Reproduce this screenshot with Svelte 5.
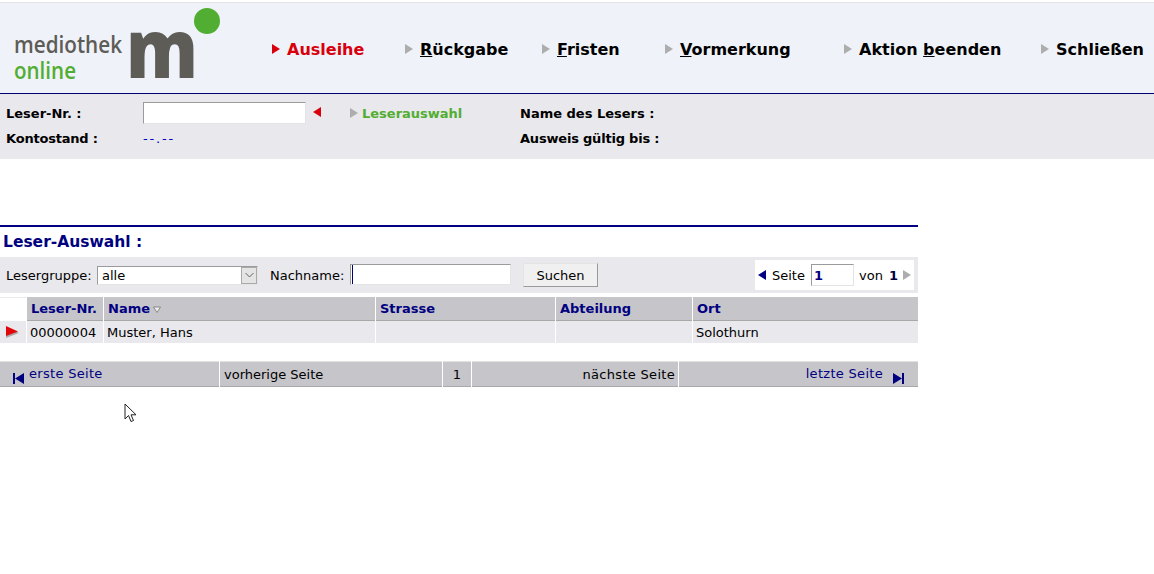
<script>
    const nav = [
        { pre: '', key: '', post: 'Ausleihe', width: 133, active: true },
        { pre: '', key: 'R', post: 'ückgabe', width: 137 },
        { pre: '', key: 'F', post: 'risten', width: 123 },
        { pre: '', key: 'V', post: 'ormerkung', width: 179 },
        { pre: 'Aktion ', key: 'b', post: 'eenden', width: 197 },
        { pre: '', key: '', post: 'Schließen', width: 113 }
    ];

    const columns = [
        { title: 'Leser-Nr.', value: '00000004', width: 76 },
        { title: 'Name', value: 'Muster, Hans', width: 271, sorted: true },
        { title: 'Strasse', value: '', width: 179 },
        { title: 'Abteilung', value: '', width: 136 },
        { title: 'Ort', value: 'Solothurn', width: 225 }
    ];
</script>

<header class="top">
    <svg class="logo" width="272" height="90" viewBox="0 0 272 90">
        <text x="14" y="50" class="logo-grey" textLength="108" lengthAdjust="spacingAndGlyphs">mediothek</text>
        <text x="14" y="76" class="logo-green" textLength="62" lengthAdjust="spacingAndGlyphs">online</text>
        <text x="126" y="75" class="logo-m" textLength="72" lengthAdjust="spacingAndGlyphs">m</text>
        <circle cx="207" cy="18" r="13" fill="#52ae32" />
    </svg>
    <nav class="nav">
        {#each nav as item}
            <div class="nav-item" class:active={item.active} style="width: {item.width}px">
                <span class="tri"></span>
                <span>{item.pre}<u>{item.key}</u>{item.post}</span>
            </div>
        {/each}
    </nav>
</header>

<section class="reader">
    <div class="reader-row">
        <span class="lbl first">Leser-Nr. :</span>
        <input class="field reader-input" type="text" />
        <span class="tri-back red"></span>
        <span class="tri small"></span>
        <span class="select-link">Leserauswahl</span>
        <span class="lbl name">Name des Lesers :</span>
    </div>
    <div class="reader-row tight">
        <span class="lbl first">Kontostand :</span>
        <span class="balance">--.--</span>
        <span class="lbl valid">Ausweis gültig bis :</span>
    </div>
</section>

<main class="content">
    <h1>Leser-Auswahl :</h1>

    <div class="toolbar">
        <label class="t-group" for="gruppe">Lesergruppe:</label>
        <div class="fake-select" id="gruppe">
            <span>alle</span>
            <span class="select-btn">
                <svg width="9" height="6" viewBox="0 0 9 6"><path d="M0.5 1 L4.5 5 L8.5 1" fill="none" stroke="#666" /></svg>
            </span>
        </div>
        <label class="t-name" for="nachname">Nachname:</label>
        <div class="name-wrap">
            <input class="field name-input" id="nachname" type="text" />
            <span class="caret"></span>
        </div>
        <button class="search" type="button">Suchen</button>
        <div class="pager">
            <span class="tri-back navy"></span>
            <span class="pager-seite">Seite</span>
            <input class="field page-input" type="text" value="1" />
            <span class="pager-von">von <b>1</b></span>
            <span class="tri"></span>
        </div>
    </div>

    <div class="thead">
        <div class="corner"></div>
        {#each columns as col}
            <div class="th" style="width: {col.width}px">
                {col.title}
                {#if col.sorted}
                    <svg class="sort" width="8" height="7" viewBox="0 0 8 7"><path d="M0.5 1 H7.5 L4 6.5 Z" fill="#eee" stroke="#777" stroke-width="0.8" /></svg>
                {/if}
            </div>
        {/each}
    </div>
    <div class="tbody">
        <div class="marker">
            <svg width="14" height="14" viewBox="0 0 14 14">
                <path d="M1 2 L14 8 L1 13 Z" fill="#aaa" />
                <path d="M1 1 L13 6.5 L1 11 Z" fill="#e0060c" />
            </svg>
        </div>
        {#each columns as col}
            <div class="td" style="width: {col.width}px">{col.value}</div>
        {/each}
    </div>

    <div class="pagebar">
        <div class="pb first-page">
            <svg width="11" height="11" viewBox="0 0 11 11"><path d="M0 0 H2 V11 H0 Z M11 0 V11 L2 5.5 Z" fill="#000080" /></svg>
            <span>erste Seite</span>
        </div>
        <div class="pb prev">vorherige Seite</div>
        <div class="pb num">1</div>
        <div class="pb next">nächste Seite</div>
        <div class="pb last-page">
            <span>letzte Seite</span>
            <svg width="11" height="11" viewBox="0 0 11 11"><path d="M0 0 L9 5.5 L0 11 Z M9 0 H11 V11 H9 Z" fill="#000080" /></svg>
        </div>
    </div>
</main>

<svg class="cursor" width="14" height="20" viewBox="0 0 14 20">
    <path d="M1 1 V16 L4.5 12.5 L7 18.5 L9.5 17.5 L7 11.8 H12 Z" fill="#fff" stroke="#222" stroke-width="1" />
</svg>

<style>
    :global(body) {
        margin: 0;
        background: #fff;
        font-family: "DejaVu Sans", Verdana, sans-serif;
        font-size: 13px;
        color: #000;
    }

    .top {
        display: flex;
        height: 90px;
        margin-top: 2px;
        background: #eff2f8;
        border-top: 1px solid #e2e2e2;
        border-bottom: 1px solid #000070;
    }

    .logo {
        flex: none;
        display: block;
    }

    .logo-grey {
        font: 600 23px "Open Sans", sans-serif;
        fill: #5d5c57;
    }

    .logo-green {
        font: 600 23px "Open Sans", sans-serif;
        fill: #52ae32;
    }

    .logo-m {
        font: 800 82px "Open Sans", sans-serif;
        fill: #5d5c57;
    }

    .nav {
        display: flex;
        align-items: center;
        box-sizing: border-box;
        height: 90px;
        padding-top: 2px;
        font-size: 16px;
        font-weight: bold;
    }

    .nav-item {
        display: flex;
        align-items: center;
        gap: 7px;
        white-space: nowrap;
    }

    .nav-item.active {
        color: #d9000d;
    }

    .tri {
        flex: none;
        width: 0;
        height: 0;
        border-left: 8px solid #adadad;
        border-top: 5px solid transparent;
        border-bottom: 5px solid transparent;
    }

    .nav-item.active .tri {
        border-left-color: #d9000d;
    }

    .reader {
        height: 65px;
        box-sizing: border-box;
        padding-top: 7px;
        background: #e9e8ec;
        font-weight: bold;
    }

    .reader-row {
        display: flex;
        align-items: center;
        height: 24px;
        margin-bottom: 1px;
    }

    .reader-row.tight .lbl {
        letter-spacing: -0.2px;
    }

    .lbl.first {
        width: 143px;
        padding-left: 6px;
        box-sizing: border-box;
        flex: none;
    }

    .field {
        box-sizing: border-box;
        background: #fff;
        border: 1px solid #e4e4e4;
        border-top-color: #9b9b9b;
        border-left-color: #9b9b9b;
        margin: 0;
        padding: 0 2px;
        font: inherit;
        outline: none;
    }

    .reader-input {
        width: 163px;
        height: 22px;
        flex: none;
    }

    .tri-back {
        flex: none;
        width: 0;
        height: 0;
        border-top: 5px solid transparent;
        border-bottom: 5px solid transparent;
        border-right: 8px solid #000080;
    }

    .tri-back.red {
        border-right-color: #d9000d;
        margin: -2px 0 0 7px;
    }

    .tri.small {
        margin-left: 29px;
    }

    .select-link {
        margin-left: 4px;
        width: 158px;
        color: #52ae32;
    }

    .balance {
        width: 377px;
        flex: none;
        font-weight: normal;
        letter-spacing: 1.8px;
        color: #0000c8;
    }

    .content {
        width: 918px;
        padding-top: 66px;
    }

    h1 {
        margin: 0;
        height: 32px;
        box-sizing: border-box;
        border-top: 2px solid #000080;
        padding: 6px 0 0 3px;
        font-size: 15.5px;
        line-height: 18px;
        color: #000080;
    }

    .toolbar {
        display: flex;
        align-items: center;
        height: 36px;
        background: #e9e8ec;
    }

    .t-group {
        width: 97px;
        padding-left: 6px;
        box-sizing: border-box;
        flex: none;
    }

    .fake-select {
        display: flex;
        align-items: stretch;
        justify-content: space-between;
        box-sizing: border-box;
        width: 161px;
        height: 19px;
        background: #fff;
        border: 1px solid #e4e4e4;
        border-top-color: #9b9b9b;
        border-left-color: #9b9b9b;
        padding-left: 4px;
        line-height: 17px;
    }

    .select-btn {
        display: flex;
        align-items: center;
        justify-content: center;
        width: 16px;
        background: #e4e4e4;
        border: 1px solid #aaa;
        box-sizing: border-box;
    }

    .t-name {
        margin-left: 12px;
        width: 80px;
        flex: none;
    }

    .name-wrap {
        position: relative;
        display: flex;
        flex: none;
        margin-top: -1px;
    }

    .name-input {
        width: 161px;
        height: 21px;
    }

    .caret {
        position: absolute;
        left: 2px;
        top: 1px;
        width: 1px;
        height: 19px;
        background: #000070;
    }

    .search {
        box-sizing: border-box;
        width: 75px;
        height: 24px;
        margin: 0 0 0 12px;
        padding: 0;
        background: #f0f0f0;
        border: 1px solid #e4e4e4;
        border-right-color: #999;
        border-bottom-color: #999;
        font: inherit;
    }

    .pager {
        display: flex;
        align-items: center;
        box-sizing: border-box;
        width: 159px;
        height: 30px;
        margin-left: 157px;
        padding-left: 3px;
        background: #fff;
    }

    .pager-seite {
        margin-left: 6px;
        width: 39px;
    }

    .page-input {
        width: 43px;
        height: 22px;
        color: #000080;
        font-weight: bold;
    }

    .pager-von {
        margin-left: 5px;
        width: 44px;
        white-space: nowrap;
    }

    .pager-von b {
        color: #000040;
        margin-left: 2px;
    }

    .thead {
        display: flex;
        gap: 1px;
        margin-top: 4px;
        height: 24px;
    }

    .corner {
        width: 26px;
        flex: none;
        box-sizing: border-box;
        border-top: 1px solid #e9e8ec;
    }

    .th {
        flex: none;
        box-sizing: border-box;
        padding-left: 4px;
        background: #c6c5ca;
        border-bottom: 1px solid #a8a8a8;
        color: #000080;
        font-weight: bold;
        line-height: 24px;
        white-space: nowrap;
    }

    .sort {
        margin-left: -2px;
    }

    .tbody {
        display: flex;
        gap: 1px;
        height: 22px;
    }

    .marker {
        display: flex;
        align-items: center;
        justify-content: flex-end;
        box-sizing: border-box;
        padding-right: 7px;
        width: 26px;
        flex: none;
        background: #e9e8ec;
    }

    .td {
        flex: none;
        box-sizing: border-box;
        padding-left: 3px;
        background: #e9e8ec;
        line-height: 24px;
        white-space: nowrap;
    }

    .pagebar {
        display: flex;
        gap: 1px;
        margin-top: 18px;
        height: 26px;
    }

    .pb {
        box-sizing: border-box;
        flex: none;
        display: flex;
        align-items: center;
        background: #c6c5ca;
        border-top: 1px solid #e2e2e2;
        border-bottom: 1px solid #a8a8a8;
    }

    .first-page {
        width: 219px;
        padding-left: 13px;
        color: #000080;
        letter-spacing: 0.3px;
    }

    .first-page span {
        margin: -1px 0 0 5px;
    }

    .first-page svg {
        margin-top: 9px;
    }

    .prev {
        width: 222px;
        padding-left: 4px;
    }

    .num {
        width: 28px;
        justify-content: center;
    }

    .next {
        width: 206px;
        justify-content: flex-end;
        padding-right: 3px;
        letter-spacing: 0.3px;
    }

    .last-page {
        width: 239px;
        justify-content: flex-end;
        padding-right: 14px;
        color: #000080;
        letter-spacing: 0.3px;
    }

    .last-page span {
        margin: -1px 10px 0 0;
    }

    .last-page svg {
        margin-top: 9px;
    }

    .cursor {
        position: absolute;
        left: 124px;
        top: 403px;
    }
</style>
